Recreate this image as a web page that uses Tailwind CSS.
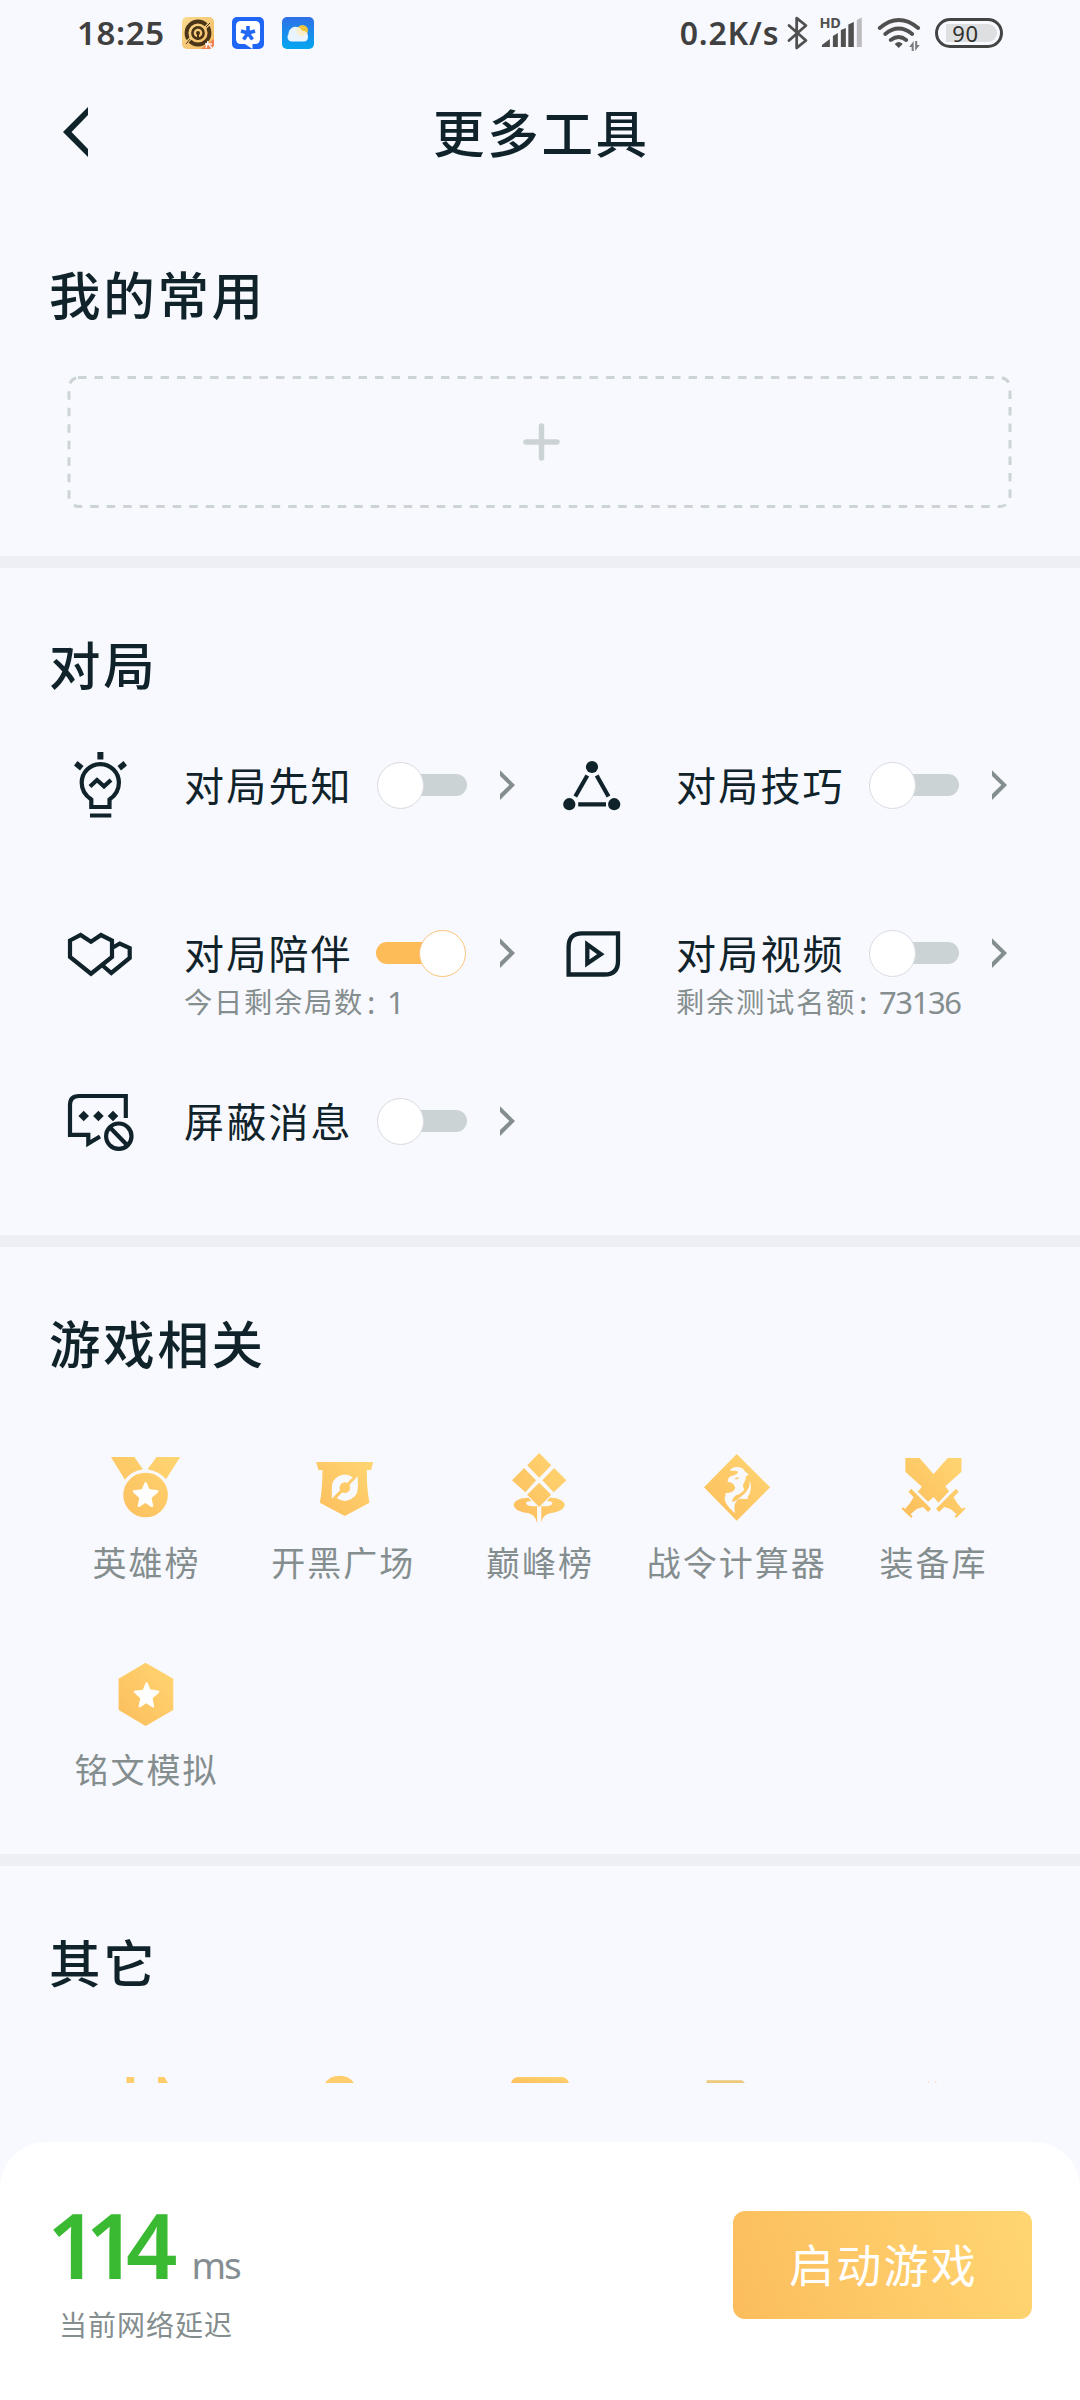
<!DOCTYPE html>
<html lang="zh-CN">
<head>
<meta charset="utf-8">
<title>更多工具</title>
<script src="https://cdn.jsdelivr.net/npm/@tailwindcss/browser@4"></script>
</head>
<body class="w-[1080px] h-[2400px] overflow-hidden bg-[#f8f9fe] text-[#10232a] font-['Noto_Sans','Noto_Sans_CJK_SC',sans-serif] flex flex-col">
<svg class="absolute w-0 h-0" aria-hidden="true">
  <defs>
    <linearGradient id="gold" x1="0" y1="1" x2="1" y2="0"><stop offset="0" stop-color="#fcbd5c"/><stop offset="1" stop-color="#ffd672"/></linearGradient>
    <linearGradient id="sky" x1="0" y1="0" x2="0" y2="1"><stop offset="0" stop-color="#2f6fe8"/><stop offset="1" stop-color="#04a7f0"/></linearGradient>
    <linearGradient id="tan" x1="0" y1="0" x2="1" y2="1"><stop offset="0" stop-color="#fbdc92"/><stop offset="1" stop-color="#f0b75c"/></linearGradient>
    <symbol id="chevron" viewBox="0 0 15 30"><path fill="#858e8e" d="M0 .3 15 15 0 30V24L9.300 15 0 6Z"/></symbol>
    <path id="star" d="M198 155Q201 155 209 177L235 181Q239 184 234 188L216 204L221 229Q220 233 214 230L197 219L180 230Q174 233 174 228L179 204L162 188Q157 183 162 181L187 178Q195 155 198 155Z"/>
  </defs>
</svg>

<!-- status bar -->
<div class="h-[66px] shrink-0 flex items-center pl-[77px] pr-[77px] text-[#404040]">
  <span class="w-[90px] text-[33px] leading-[40px] font-semibold whitespace-nowrap tracking-[0.6px]">18:25</span>
  <div class="flex gap-[18px] ml-[15px]">
    <svg class="w-8 h-8" viewBox="0 0 32 32"><rect width="32" height="32" rx="5" fill="url(#tan)"/><g fill="none" stroke="#4a3518"><circle cx="16" cy="16" r="11.500" stroke-width="3.800"/><circle cx="16" cy="16" r="5.600" stroke-width="2.600"/></g><circle cx="16" cy="16" r="2" fill="#4a3518"/><path d="M16 16v7" stroke="#4a3518" stroke-width="2"/><path d="M3 27 9 21M23 11 29 5" stroke="#f6cb7c" stroke-width="3"/><path d="M4 27 8 22M24 10 28 6" stroke="#4a3518" stroke-width="1"/><path d="M32 22V27a5 5 0 0 1-5 5H19Z" fill="#f08050"/><path d="M23 27h7M26 24l-2 7M27 28l3 3" stroke="#fff" stroke-width="1.300"/></svg>
    <svg class="w-8 h-8" viewBox="0 0 32 32"><rect width="32" height="32" rx="5" fill="#1f66f5"/><path fill="#fff" d="M9 4H23Q28 4 28 9V22Q28 27 23 27L20.500 27V32L13 27H9Q4 27 4 22V9Q4 4 9 4Z"/><path d="M16 16V9M16 16l7-2M16 16l4.500 6.500M16 16l-4.500 6.500M16 16l-7-2" stroke="#2068f5" stroke-width="3.600"/></svg>
    <svg class="w-8 h-8" viewBox="0 0 32 32"><rect width="32" height="32" rx="5" fill="url(#sky)"/><circle cx="20.500" cy="13.500" r="5.500" fill="#f2c53f"/><path fill="#e9f4fe" d="M10 24.500a4.500 4.500 0 0 1-3.500-7.500A7 7 0 0 1 16.500 10.500 6 6 0 0 1 20 14Q26 14 26 19.500T21 24.500Z"/><path fill="#fbeecb" d="M15 11a5 5 0 0 0 10 5Q23 13.500 20 14 18.500 11 15 11Z"/></svg>
  </div>
  <span class="ml-[366px] w-[101px] text-[32px] leading-[40px] font-semibold whitespace-nowrap tracking-[0.8px]">0.2K/s</span>
  <svg class="ml-1 w-[146px] h-[40px]" viewBox="784 13 146 40">
    <path d="M788 25.500 805 40.500 795.700 48V18L805 25.500 788 40.500" fill="none" stroke="#505050" stroke-width="2.800" stroke-linejoin="round" stroke-linecap="round"/>
    <text x="818.500" y="28" font-size="14.500" font-weight="700" letter-spacing="-.2" fill="#505050" font-family="Noto Sans, sans-serif">HD</text>
    <path fill="#505050" d="M821 47V45L829 39V47ZM832 47V36L837 33V47ZM840 47V30L845 28V47ZM847.500 47V24.500L853 22V47Z"/><path fill="#bcbcbe" d="M856 47V20L861 17.500V47Z"/>
    <g fill="none" stroke="#505050" stroke-width="3.800" stroke-linecap="round"><path d="M879 28Q898 12 917.500 28M884.500 34Q898 23 911.500 34M890 40Q898 34 905.500 40"/></g>
    <path fill="#505050" d="M894 44Q898 40 902 44L898 48Z"/>
    <path fill="#505050" d="M908.500 47 913 41V51H911V47ZM919 45 914.500 51V41H916.500V45Z" opacity=".75"/>
  </svg>
  <div class="ml-[5px] w-[68px] h-[30px] rounded-full border-[3px] border-[#444] flex items-center pl-2">
    <div class="w-[51px] h-[18px] rounded-l-[3px] rounded-r-full bg-[#dedfe1] text-[22px] leading-[19px] pl-[6px] text-[#303030] tracking-[0.8px]">90</div>
  </div>
</div>

<!-- title bar -->
<header class="h-[132px] shrink-0 flex items-center relative">
  <svg class="ml-[63px] w-[25px] h-[50px]" viewBox="0 0 25 50"><path fill="#10232a" d="M25 0 0 25 25 50V42L8.500 25 25 8Z"/></svg>
  <h1 class="ml-[345px] pt-px text-[51.500px] leading-[64px] tracking-[2.700px] font-medium whitespace-nowrap">更多工具</h1>
</header>

<main class="h-[1885px] shrink-0 overflow-hidden">
  <section class="h-[358px] pt-[65px]">
    <h2 class="pl-[49px] text-[51.500px] leading-[64px] tracking-[2.700px] font-medium">我的常用</h2>
    <svg class="mt-[49px] ml-[67px] w-[946px] h-[132px]" viewBox="67 376 946 132">
      <path d="M78 377.500H1000A10 10 0 0 1 1010 387.500V496.500A10 10 0 0 1 1000 506.500H79A10 10 0 0 1 69 496.500V387.500A10 10 0 0 1 79 377.500" fill="none" stroke="#cdd4d5" stroke-width="3" stroke-dasharray="8.500 8"/>
      <path d="M526 442H557M541.500 426V458" stroke="#cbd3d5" stroke-width="5.500" stroke-linecap="round"/>
    </svg>
  </section>
  <div class="h-3 bg-[#eeeff4]"></div>

  <section class="h-[667px] pt-[65px]">
    <h2 class="pl-[49px] text-[51.500px] leading-[64px] tracking-[2.700px] font-medium">对局</h2>
    <div class="mt-[4px] px-12 grid grid-cols-2">
      <div class="h-[168px] flex items-start">
        <svg class="w-[104px] h-[168px] shrink-0" viewBox="48 701 104 168"><g fill="none" stroke="#10232a" stroke-width="4.200"><path d="M91.300 807V799.500Q81.700 793 81.700 782.700A18.600 18.600 0 0 1 118.900 782.700Q118.900 793 109.500 799.500V807Z"/><path d="M90 815.500H111.300M90 786.500 97 780 104 786.300 111 780"/></g><path fill="#10232a" d="M97.400 752H103.400V759.500H97.400ZM77.500 761 83.500 766 80 770.500 74 765.500ZM123.500 761 127 765.500 121 770.500 117.500 766Z"/></svg>
        <div class="ml-[32px] mt-[61px] w-[168px] whitespace-nowrap"><div class="text-[40px] leading-[48px] tracking-[2.200px]">对局先知</div></div>
        <div class="ml-[24px] mt-[60.500px] w-[91px] h-[47px] relative shrink-0 flex items-center justify-end"><div class="w-[70px] h-[22px] rounded-full bg-[#cbd3d5]"></div><div class="absolute left-[1px] top-0 size-[47px] rounded-full bg-white border border-[#d8dbe1]"></div></div>
        <svg class="ml-[33px] mt-[69px] w-[15px] h-[30px]"><use href="#chevron"/></svg>
      </div>
      <div class="h-[168px] flex items-start">
        <svg class="w-[104px] h-[168px] shrink-0" viewBox="540 701 104 168"><g fill="#10232a"><circle cx="592" cy="767" r="6.100"/><circle cx="569.300" cy="804.200" r="6.100"/><circle cx="614.200" cy="804.200" r="6.100"/></g><path d="M587.300 775.500 575.300 796.500M596.700 775.500 608.500 796.500M578.200 804.300H606" stroke="#10232a" stroke-width="4.200"/></svg>
        <div class="ml-[32px] mt-[61px] w-[168px] whitespace-nowrap"><div class="text-[40px] leading-[48px] tracking-[2.200px]">对局技巧</div></div>
        <div class="ml-[24px] mt-[60.500px] w-[91px] h-[47px] relative shrink-0 flex items-center justify-end"><div class="w-[70px] h-[22px] rounded-full bg-[#cbd3d5]"></div><div class="absolute left-[1px] top-0 size-[47px] rounded-full bg-white border border-[#d8dbe1]"></div></div>
        <svg class="ml-[33px] mt-[69px] w-[15px] h-[30px]"><use href="#chevron"/></svg>
      </div>
      <div class="h-[168px] flex items-start">
        <svg class="w-[104px] h-[168px] shrink-0" viewBox="48 869 104 168"><path fill="none" stroke="#10232a" stroke-width="4.200" d="M70 940.500 80.600 935 91 941.800 101 935 112 940.500V957L91 973.700 70 957ZM112 948 119.800 943.500 129.700 948V958L111.300 973 102.500 965.500"/></svg>
        <div class="ml-[32px] mt-[61px] w-[168px] whitespace-nowrap"><div class="text-[40px] leading-[48px] tracking-[2.200px]">对局陪伴</div><div class="text-[28.300px] leading-[48px] tracking-[1.700px] text-[#858e8e] flex"><span class="shrink-0">今日剩余局数</span><span class="shrink-0 ml-[3px] w-[20px] text-[31px]">:</span><span class="shrink-0 text-[31px]">1</span></div></div>
        <div class="ml-[24px] mt-[60.500px] w-[91px] h-[47px] relative shrink-0 flex items-center"><div class="w-[70px] h-[22px] rounded-full bg-[#fdbc57]"></div><div class="absolute right-[1px] top-0 size-[47px] rounded-full bg-white border border-[#fac47a]"></div></div>
        <svg class="ml-[33px] mt-[69px] w-[15px] h-[30px]"><use href="#chevron"/></svg>
      </div>
      <div class="h-[168px] flex items-start">
        <svg class="w-[104px] h-[168px] shrink-0" viewBox="540 869 104 168"><path fill="none" stroke="#10232a" stroke-width="4.300" d="M568.600 974.500V947Q568.600 933.400 582 933.400H618V961Q618 974.500 604.500 974.500ZM587.300 944.500V963.500L600.800 954.300Z"/></svg>
        <div class="ml-[32px] mt-[61px] w-[168px] whitespace-nowrap"><div class="text-[40px] leading-[48px] tracking-[2.200px]">对局视频</div><div class="text-[28.300px] leading-[48px] tracking-[1.700px] text-[#858e8e] flex"><span class="shrink-0">剩余测试名额</span><span class="shrink-0 ml-[3px] w-[20px] text-[31px]">:</span><span class="shrink-0 text-[31px] tracking-[-1.400px]">73136</span></div></div>
        <div class="ml-[24px] mt-[60.500px] w-[91px] h-[47px] relative shrink-0 flex items-center justify-end"><div class="w-[70px] h-[22px] rounded-full bg-[#cbd3d5]"></div><div class="absolute left-[1px] top-0 size-[47px] rounded-full bg-white border border-[#d8dbe1]"></div></div>
        <svg class="ml-[33px] mt-[69px] w-[15px] h-[30px]"><use href="#chevron"/></svg>
      </div>
      <div class="h-[168px] flex items-start">
        <svg class="w-[104px] h-[168px] shrink-0" viewBox="48 1037 104 168"><g fill="none" stroke="#10232a" stroke-width="4.200"><path d="M125.800 1118V1096H79Q70 1096 70 1105V1134.800H88.300V1143.500L100 1136.500"/><circle cx="118.800" cy="1136.200" r="12.700"/><path d="M110 1127.500 127.500 1145.500"/></g><path fill="#10232a" d="M83.700 1110.800 89 1116 83.700 1121.200 78.400 1116ZM98.400 1110.800 103.700 1116 98.400 1121.200 93.100 1116ZM113 1110.800 118.300 1116 113 1121.200 107.700 1116Z"/></svg>
        <div class="ml-[32px] mt-[61px] w-[168px] whitespace-nowrap"><div class="text-[40px] leading-[48px] tracking-[2.200px]">屏蔽消息</div></div>
        <div class="ml-[24px] mt-[60.500px] w-[91px] h-[47px] relative shrink-0 flex items-center justify-end"><div class="w-[70px] h-[22px] rounded-full bg-[#cbd3d5]"></div><div class="absolute left-[1px] top-0 size-[47px] rounded-full bg-white border border-[#d8dbe1]"></div></div>
        <svg class="ml-[33px] mt-[69px] w-[15px] h-[30px]"><use href="#chevron"/></svg>
      </div>
    </div>
  </section>
  <div class="h-3 bg-[#eeeff4]"></div>

  <section class="h-[607px] pt-[65px]">
    <h2 class="pl-[49px] text-[51.500px] leading-[64px] tracking-[2.700px] font-medium">游戏相关</h2>
    <div class="mt-[64px] px-12 grid grid-cols-5 text-[34px] leading-[48px] tracking-[2px] text-[#858e8e] whitespace-nowrap">
      <div class="h-[207px] flex flex-col items-center">
        <svg class="w-24 h-[92px] mb-[7px]" viewBox="98.400 1440 96 92"><g transform="translate(80 1430) scale(.33333)"><path fill="url(#gold)" d="M94 81H164L190 118Q157 123 136 149ZM231 81H302L259 148Q239 124 204 118ZM131 195A67 67 0 1 0 265 195A67 67 0 1 0 131 195Z"/><use href="#star" fill="#fff"/></g></svg>
        <span>英雄榜</span>
      </div>
      <div class="h-[207px] flex flex-col items-center">
        <svg class="w-24 h-[92px] mb-[7px]" viewBox="295.200 1440 96 92"><g transform="translate(80 1430) scale(.33333)"><path fill="url(#gold)" d="M709 96H880L874 120H861Q861 180 869 218L795 258 720 218Q728 180 728 120H716Z"/><path fill="#f8f9fe" d="M756 206V174A39 39 0 0 1 819 142ZM834 139V174A39 39 0 0 1 771 204Z"/><circle cx="795" cy="173" r="16" fill="#fecb68"/></g></svg>
        <span>开黑广场</span>
      </div>
      <div class="h-[207px] flex flex-col items-center">
        <svg class="w-24 h-[92px] mb-[7px]" viewBox="492 1440 96 92"><g transform="translate(460 1430) scale(.34438 .33333)"><path fill="url(#gold)" d="M230 69 265 106 230 143 195 106ZM186 114 221 151 190 187 151 151ZM273 114 309 151 272 187 239 151ZM230 158 265 194 230 231 195 194ZM199 203C176 202 156 212 156 226C158 240 180 248 196 249C211 252 221 262 222 276H224V228C210 231 192 227 192 220Q192 212 208 214ZM261 203C284 202 304 212 304 226C302 240 280 248 264 249C249 252 239 262 237 276H236V228C250 231 268 227 268 220Q268 212 252 214Z"/></g></svg>
        <span>巅峰榜</span>
      </div>
      <div class="h-[207px] flex flex-col items-center">
        <svg class="w-24 h-[92px] mb-[7px]" viewBox="688.800 1440 96 92"><g transform="translate(460 1430) scale(.34438 .33333)"><path fill="url(#gold)" d="M803 72 900 172 803 272 708 172Z"/><path fill="#f8f9fe" d="M783 122C788 108 818 106 826 123L838 134 829 139C832 150 821 160 821 170C829 178 821 188 803 195C792 202 788 210 791 217C810 206 830 190 838 173Q842 162 840 151C847 166 844 185 839 194Q830 203 839 205C826 210 817 203 808 208C794 218 795 235 799 250C780 232 767 218 768 203Q773 196 770 189C788 190 800 181 798 170Q794 160 783 156L777 157C776 143 786 137 796 136Q806 132 807 126C800 120 791 124 783 122Z"/><path fill="#fdc765" d="M796 147Q803 140 810 143Q806 150 796 147Z"/></g></svg>
        <span>战令计算器</span>
      </div>
      <div class="h-[207px] flex flex-col items-center">
        <svg class="w-24 h-[92px] mb-[7px]" viewBox="885.600 1440 96 92"><g transform="translate(460 1430) scale(.34438 .33333)"><path fill="url(#gold)" d="M1292 84H1333L1374 132 1415 84H1455V125L1408 169 1419 184 1388 218 1374 201 1358 215 1328 185 1340 170 1292 125ZM1309 176 1367 236 1358 246 1343 231 1325 237 1307 253 1313 259 1309 264 1281 236 1285 232 1291 237 1305 220 1316 202 1301 185ZM1439 176 1381 236 1390 246 1405 231 1423 237 1441 253 1435 259 1439 264 1467 236 1463 232 1457 237 1443 220 1432 202 1447 185Z"/></g></svg>
        <span>装备库</span>
      </div>
      <div class="h-[207px] flex flex-col items-center">
        <svg class="w-24 h-[92px] mb-[7px]" viewBox="98.400 1647 96 92"><g transform="translate(0 1630) scale(.33333)"><path fill="url(#gold)" d="M438 98 521 146V240L438 288 357 240V146Z"/><use href="#star" x="243" y="1" fill="#fff"/></g></svg>
        <span>铭文模拟</span>
      </div>
    </div>
  </section>
  <div class="h-3 bg-[#eeeff4]"></div>

  <section class="h-[217px] pt-[65px] overflow-hidden">
    <h2 class="pl-[49px] text-[51.500px] leading-[64px] tracking-[2.700px] font-medium">其它</h2>
    <svg class="mt-[64px] w-[1080px] h-[24px]" viewBox="0 2059 1080 24">
      <path fill="#ffcd6b" d="M126.500 2077H134V2083H126.500ZM158 2077H164.500L168 2083H158ZM325 2083Q330 2075.700 339.500 2075.700T354 2083Z"/>
      <path fill="url(#gold)" d="M511 2083Q513 2077 518 2077H562Q567 2077 569 2083Z"/>
      <path fill="#edc97c" d="M706.500 2080.300H742L745 2083H706.500Z"/>
      <path fill="#fbe3d3" d="M928 2081H929.500V2083H928ZM935 2081H936.500V2083H935Z"/>
    </svg>
  </section>
</main>

<!-- launch bar -->
<footer class="mt-[59px] h-[258px] shrink-0 rounded-t-[46px] bg-white flex justify-between pl-[47px] pr-12">
  <div class="pt-[53px]">
    <div class="flex items-baseline h-[98px] leading-[98px]"><span class="text-[90px] font-semibold text-[#3aba32] tracking-[-13px]">1<span class="tracking-[-11px]">1</span>4</span><span class="ml-[27px] text-[37px] tracking-[-2px] text-[#858e93]">ms</span></div>
    <div class="mt-[10px] pl-[12px] text-[28px] leading-[44px] tracking-[1px] text-[#858e8e]">当前网络延迟</div>
  </div>
  <button class="mt-[69px] w-[299px] h-[108px] rounded-xl bg-linear-[70deg,#fcbd5c,#ffd672] text-white text-[45px] leading-[107px] tracking-[2.300px] pl-[2px]">启动游戏</button>
</footer>
</body>
</html>
